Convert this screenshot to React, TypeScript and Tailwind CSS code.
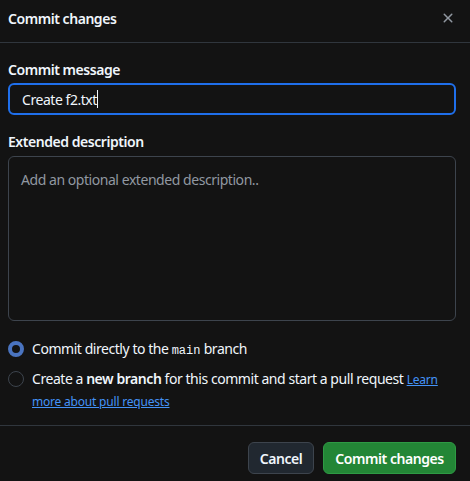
import React from "react";

export default function App() {
  return (
    <div
      className="w-[470px] h-[481px] bg-[#131313] text-[#e6edf3] text-[14px] leading-[21px] tracking-[-0.45px] overflow-hidden"
      style={{ fontFamily: '"Noto Sans", "Open Sans", sans-serif' }}
    >
      {/* Header */}
      <div className="h-[43px] border-b border-[#30363d] flex items-start justify-between pl-2 pr-[14px] pt-[8px]">
        <h1 className="font-semibold text-[14px] leading-[21px] text-[#f0f6fc]">Commit changes</h1>
        <button className="w-[16px] h-[16px] mt-[2px] flex items-center justify-center text-[#9198a1]">
          <svg width="16" height="16" viewBox="0 0 16 16" fill="currentColor">
            <path d="M3.72 3.72a.75.75 0 0 1 1.06 0L8 6.94l3.22-3.22a.749.749 0 0 1 1.275.326.749.749 0 0 1-.215.734L9.06 8l3.22 3.22a.749.749 0 0 1-.326 1.275.749.749 0 0 1-.734-.215L8 9.06l-3.22 3.22a.751.751 0 0 1-1.042-.018.751.751 0 0 1-.018-1.042L6.94 8 3.72 4.78a.75.75 0 0 1 0-1.06Z" />
          </svg>
        </button>
      </div>

      {/* Body */}
      <div className="pl-2 pr-[14px] pt-[16px]">
        <label className="block font-semibold text-[#f0f6fc]">Commit message</label>
        <div className="mt-[3px] h-[32px] rounded-[6px] border-2 border-[#1f6feb] flex items-center pl-[12px]">
          <span className="text-[#f0f6fc]">Create f2.txt</span>
          <span className="inline-block w-px h-[18px] bg-[#f0f6fc]" />
        </div>

        <label className="block mt-[16px] font-semibold text-[#f0f6fc]">Extended description</label>
        <div className="mt-[4px] h-[165px] rounded-[6px] border border-[#3d444d] px-[12px] pt-[12px]">
          <span className="text-[#9198a1]">Add an optional extended description..</span>
        </div>

        <div className="mt-[17px] flex flex-col gap-[6px]">
          <div className="flex items-start gap-[8px]">
            <span className="mt-[2.5px] w-[16px] h-[16px] shrink-0 rounded-full border-[4px] border-[#4a74c0] bg-[#131313]" />
            <span className="text-[#f0f6fc]">
              Commit directly to the{" "}
              <span className="text-[12px] tracking-normal" style={{ fontFamily: '"Liberation Mono", monospace' }}>
                main
              </span>{" "}
              branch
            </span>
          </div>
          <div className="flex items-start gap-[8px]">
            <span className="mt-[2.5px] w-[16px] h-[16px] shrink-0 rounded-full border border-[#3d444d] bg-[#131313]" />
            <span className="text-[#f0f6fc]">
              Create a <span className="font-semibold">new branch</span> for this commit and start a pull request{" "}
              <a className="text-[#4493f8] underline text-[12px] tracking-[-0.2px]" href="#">
                Learn more about pull requests
              </a>
            </span>
          </div>
        </div>
      </div>

      {/* Footer */}
      <div className="mt-[13px] border-t border-[#30363d] pt-[16px] pr-[14px] flex justify-end gap-[9px]">
        <button className="w-[66px] h-[32px] flex items-center justify-center rounded-[6px] bg-[#212830] border border-[#3d444d] font-semibold text-[#f0f6fc]">
          Cancel
        </button>
        <button className="w-[133px] h-[32px] flex items-center justify-center rounded-[6px] bg-[#238636] border border-[#2e9a44] font-semibold text-white">
          Commit changes
        </button>
      </div>
    </div>
  );
}
